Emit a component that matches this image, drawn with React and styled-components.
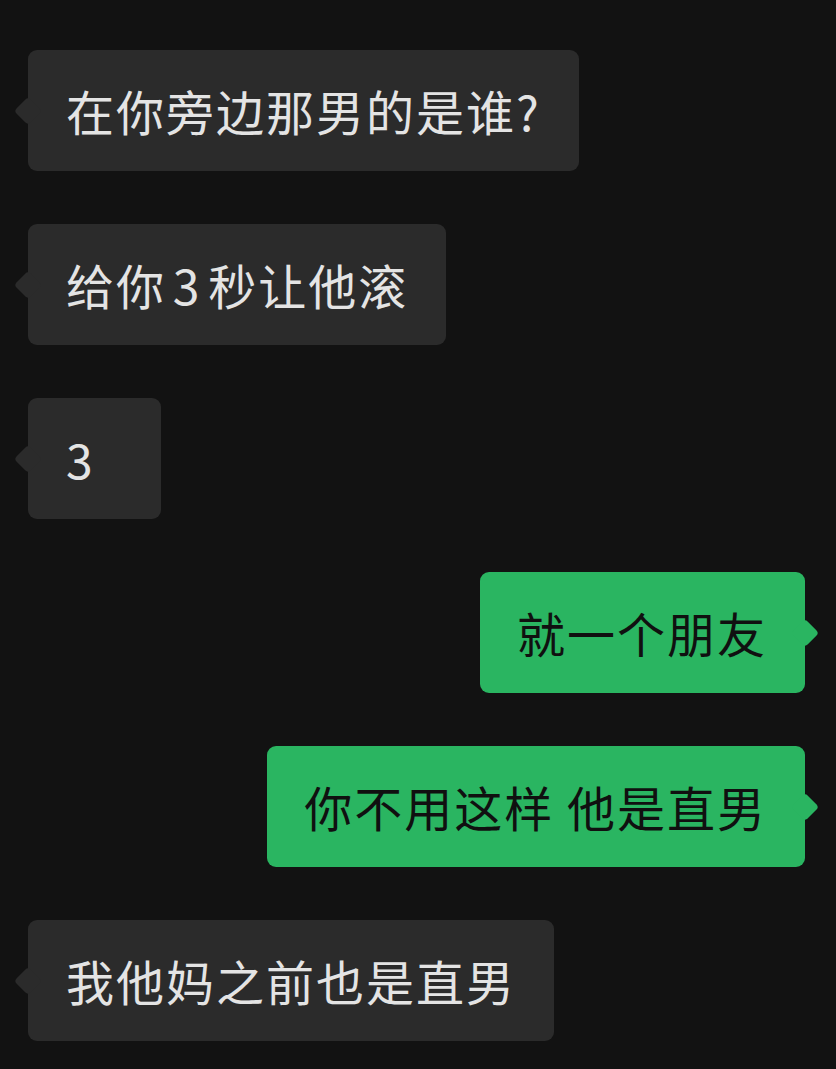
import React from "react";
import styled, { createGlobalStyle, css } from "styled-components";

const GlobalStyle = createGlobalStyle`
  html, body {
    margin: 0;
    padding: 0;
    background: #121212;
  }
  body {
    font-family: "Noto Sans CJK SC", "Noto Sans", sans-serif;
  }
`;

const Page = styled.div`
  min-height: 1069px;
  box-sizing: border-box;
  background: #121212;
  padding: 50px 31px 30px 28px;
`;

const Thread = styled.div`
  display: flex;
  flex-direction: column;
  gap: 53px;
`;

const Row = styled.div`
  display: flex;
  justify-content: ${(p) => (p.$mine ? "flex-end" : "flex-start")};
`;

const Bubble = styled.div`
  position: relative;
  box-sizing: border-box;
  min-height: 121px;
  min-width: 133px;
  padding: 30px 38px 30px 38px;
  border-radius: 9px;
  font-size: 48px;
  line-height: 61px;
  letter-spacing: 2px;
  word-spacing: ${(p) => (p.$tight ? "-6px" : "0")};
  white-space: pre;
  ${(p) =>
    p.$mine
      ? css`
          background: #2ab561;
          color: #101010;
          padding: 30px 38px 30px 37px;
        `
      : css`
          background: #2b2b2b;
          color: #e4e4e4;
        `}

  &::before {
    content: "";
    position: absolute;
    top: 50%;
    width: 20px;
    height: 20px;
    border-radius: 4px;
    transform: translateY(-50%) rotate(45deg);
    background: inherit;
    ${(p) =>
      p.$mine
        ? css`
            right: -10px;
          `
        : css`
            left: -10px;
          `}
  }
`;

const messages = [
  { text: "在你旁边那男的是谁?", mine: false },
  { text: "给你 3 秒让他滚", mine: false, tight: true },
  { text: "3", mine: false },
  { text: "就一个朋友", mine: true },
  { text: "你不用这样 他是直男", mine: true },
  { text: "我他妈之前也是直男", mine: false },
];

export default function App() {
  return (
    <>
      <GlobalStyle />
      <Page>
        <Thread>
          {messages.map((m, i) => (
            <Row key={i} $mine={m.mine}>
              <Bubble $mine={m.mine} $tight={m.tight}>
                {m.text}
              </Bubble>
            </Row>
          ))}
        </Thread>
      </Page>
    </>
  );
}
